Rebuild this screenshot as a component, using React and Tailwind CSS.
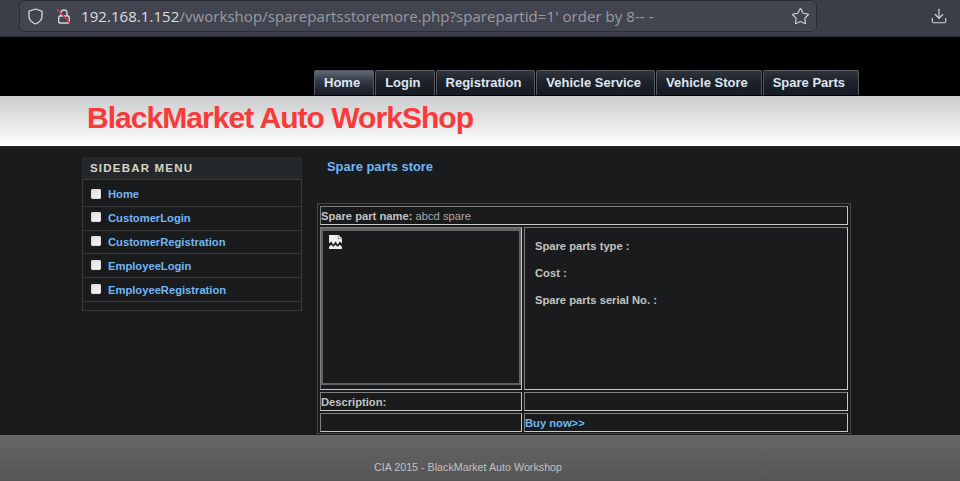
import { Download, Star } from "lucide-react";

const TABS = ["Home", "Login", "Registration", "Vehicle Service", "Vehicle Store", "Spare Parts"];
const SIDE_LINKS = ["Home", "CustomerLogin", "CustomerRegistration", "EmployeeLogin", "EmployeeRegistration"];

function BrowserBar() {
  return (
    <div className="h-[37px] bg-[#3b3e48] border-b border-[#2a2c33] flex items-start pl-[19px] font-['Open_Sans',sans-serif]">
      <div className="w-[798px] shrink-0 h-[32px] bg-[#42454f] border border-[#2b2d35] rounded-[5px] flex items-center pl-[8px] pr-[6px]">
        <svg width="15" height="17" viewBox="0 0 15 17" fill="none" className="shrink-0">
          <path d="M7.5 1 1 3.2v5c0 3.6 2.6 6.2 6.5 7.8 3.9-1.6 6.5-4.2 6.5-7.8v-5L7.5 1z" stroke="#d5d6da" strokeWidth="1.3" strokeLinejoin="round" />
        </svg>
        <svg width="16" height="17" viewBox="0 0 16 17" fill="none" className="ml-[13px] shrink-0">
          <path d="M5 8V5a3 3 0 0 1 6 0v3" stroke="#d5d6da" strokeWidth="1.4" />
          <rect x="2.7" y="8" width="10.6" height="7" rx="1.5" stroke="#d5d6da" strokeWidth="1.4" />
          <path d="M1 1l13 14" stroke="#e0304f" strokeWidth="1.5" />
        </svg>
        <div className="ml-[9px] text-[15px] tracking-[0.06px] whitespace-nowrap flex-1 text-[#9a9ba1]">
          <span className="text-[#dcdde0]">192.168.1.152</span>/vworkshop/sparepartsstoremore.php?sparepartid=1' order by 8-- -
        </div>
        <Star size={19} strokeWidth={1.4} className="text-[#d5d6da] shrink-0" />
      </div>
      <Download size={18} strokeWidth={1.5} className="ml-[113px] mt-[7px] text-[#d5d6da] shrink-0" />
    </div>
  );
}

export default function App() {
  return (
    <div className="w-[960px] h-[481px] overflow-hidden flex flex-col bg-[#191b1d] font-['Liberation_Sans',sans-serif]">
      <BrowserBar />

      {/* Tabs */}
      <div className="h-[59px] bg-black flex items-start pt-[33px] pl-[314px] gap-[1px]">
        {TABS.map((t, i) => (
          <div
            key={t}
            className={`h-[25px] pl-[9px] pr-[13px] flex items-center border-t border-x border-[#555a63] rounded-t-[2px] text-[13px] font-bold text-[#dfe6f0] bg-gradient-to-b ${
              i === 0 ? "from-[#626775] via-[#2e3340] to-[#161b26]" : "from-[#30343a] via-[#1c2029] to-[#171b24]"
            }`}
          >
            {t}
          </div>
        ))}
      </div>

      {/* Banner */}
      <div className="h-[50px] bg-gradient-to-b from-[#cbcccd] to-white pl-[87px] pt-[4px]">
        <h1 className="text-[30px] leading-[36px] font-bold tracking-[-0.96px] text-[#f93a3a]">BlackMarket Auto WorkShop</h1>
      </div>

      {/* Content */}
      <div className="flex-1 min-h-0 flex pl-[82px] pt-[10px] border-t border-[#222426]">
        <div className="w-[220px] shrink-0">
          <div className="h-[22px] bg-[#25282a] pl-[8px] pt-[1px] flex items-center text-[11.5px] font-bold tracking-[1.2px] text-[#d8d4c8]">
            SIDEBAR MENU
          </div>
          <div className="border border-[#37393b] pt-[3.15px]">
            {SIDE_LINKS.map((l, i) => (
              <div key={l} className="h-[23.75px] border-b border-[#37393b] flex items-center pl-[8px] gap-[7px]">
                <span className="w-[10px] h-[10px] rounded-[1px] bg-gradient-to-br from-[#e0e0e0] to-[#f4f4f4] mb-[2px] border border-[#dcdcdc]" />
                <span className={`text-[11.2px] font-bold text-[#72b6f5] ${i > 2 ? "translate-y-[1px]" : ""}`}>{l}</span>
              </div>
            ))}
            <div className="h-[8px]" />
          </div>
        </div>

        <div className="ml-[15px] w-[534px]">
          <div className="h-[46px] pl-[10px] pt-[1px] text-[12.9px] leading-[18px] font-bold text-[#72b6f5]">Spare parts store</div>
          <div className="border border-[#444749] pt-[2px] pl-[2px] grid grid-cols-[202px_324px] grid-rows-[20px_164px_19px_19px] gap-x-[2px] text-[11.2px] text-[#c4c4c0] w-[534px] h-[231px]">
            <div className="col-span-2 border border-[#808080] border-b-[#c8c8c4] border-r-[#c8c8c4] flex items-center pt-[1px] mb-[1px]">
              <b>Spare part name:&nbsp;</b><span className="text-[#a9a9a5]">abcd spare</span>
            </div>
            <div className="border border-[#808080] border-b-[#c8c8c4] border-r-[#c8c8c4] mt-[1px]">
              <div className="h-[157px] border-[2px] border-t-[3px] border-[#606264] pl-[6px] pt-[4px]">
                <svg width="13" height="14" viewBox="0 0 12 13">
                  <path d="M0 0h9l3 3v5l-2-2-2 3-2-3-2 3-2-3-2 2z" fill="#eee" />
                  <path d="M8.5 .5v3h3" fill="none" stroke="#888" strokeWidth=".8" />
                  <path d="M0 11l2-2 2 2 2-2 2 2 2-2 2 2v2H0z" fill="#eee" />
                </svg>
              </div>
            </div>
            <div className="border border-[#808080] border-b-[#c8c8c4] border-r-[#c8c8c4] pl-[10px] pt-[12px] font-bold flex flex-col gap-[14px] mt-[1px]">
              <div className="leading-[13px]">Spare parts type :</div>
              <div className="leading-[13px]">Cost :</div>
              <div className="leading-[13px]">Spare parts serial No. :</div>
            </div>
            <div className="border border-[#808080] border-b-[#c8c8c4] border-r-[#c8c8c4] flex items-center pt-[1px] font-bold mt-[2px] -mb-[2px]">Description:</div>
            <div className="border border-[#808080] border-b-[#c8c8c4] border-r-[#c8c8c4] mt-[2px] -mb-[2px]" />
            <div className="border border-[#808080] border-b-[#c8c8c4] border-r-[#c8c8c4] mt-[4px] -mb-[4px]" />
            <div className="border border-[#808080] border-b-[#c8c8c4] border-r-[#c8c8c4] flex items-center pt-[1px] font-bold text-[#72b6f5] mt-[4px] -mb-[4px]">Buy now&gt;&gt;</div>
          </div>
        </div>
      </div>

      {/* Footer */}
      <div className="h-[46px] shrink-0 bg-gradient-to-b from-[#666666] to-[#555555] flex justify-center pt-[26px] pr-[24px] text-[10.72px] leading-[13px] text-[#c0c0c0]">
        CIA 2015 - BlackMarket Auto Workshop
      </div>
    </div>
  );
}
